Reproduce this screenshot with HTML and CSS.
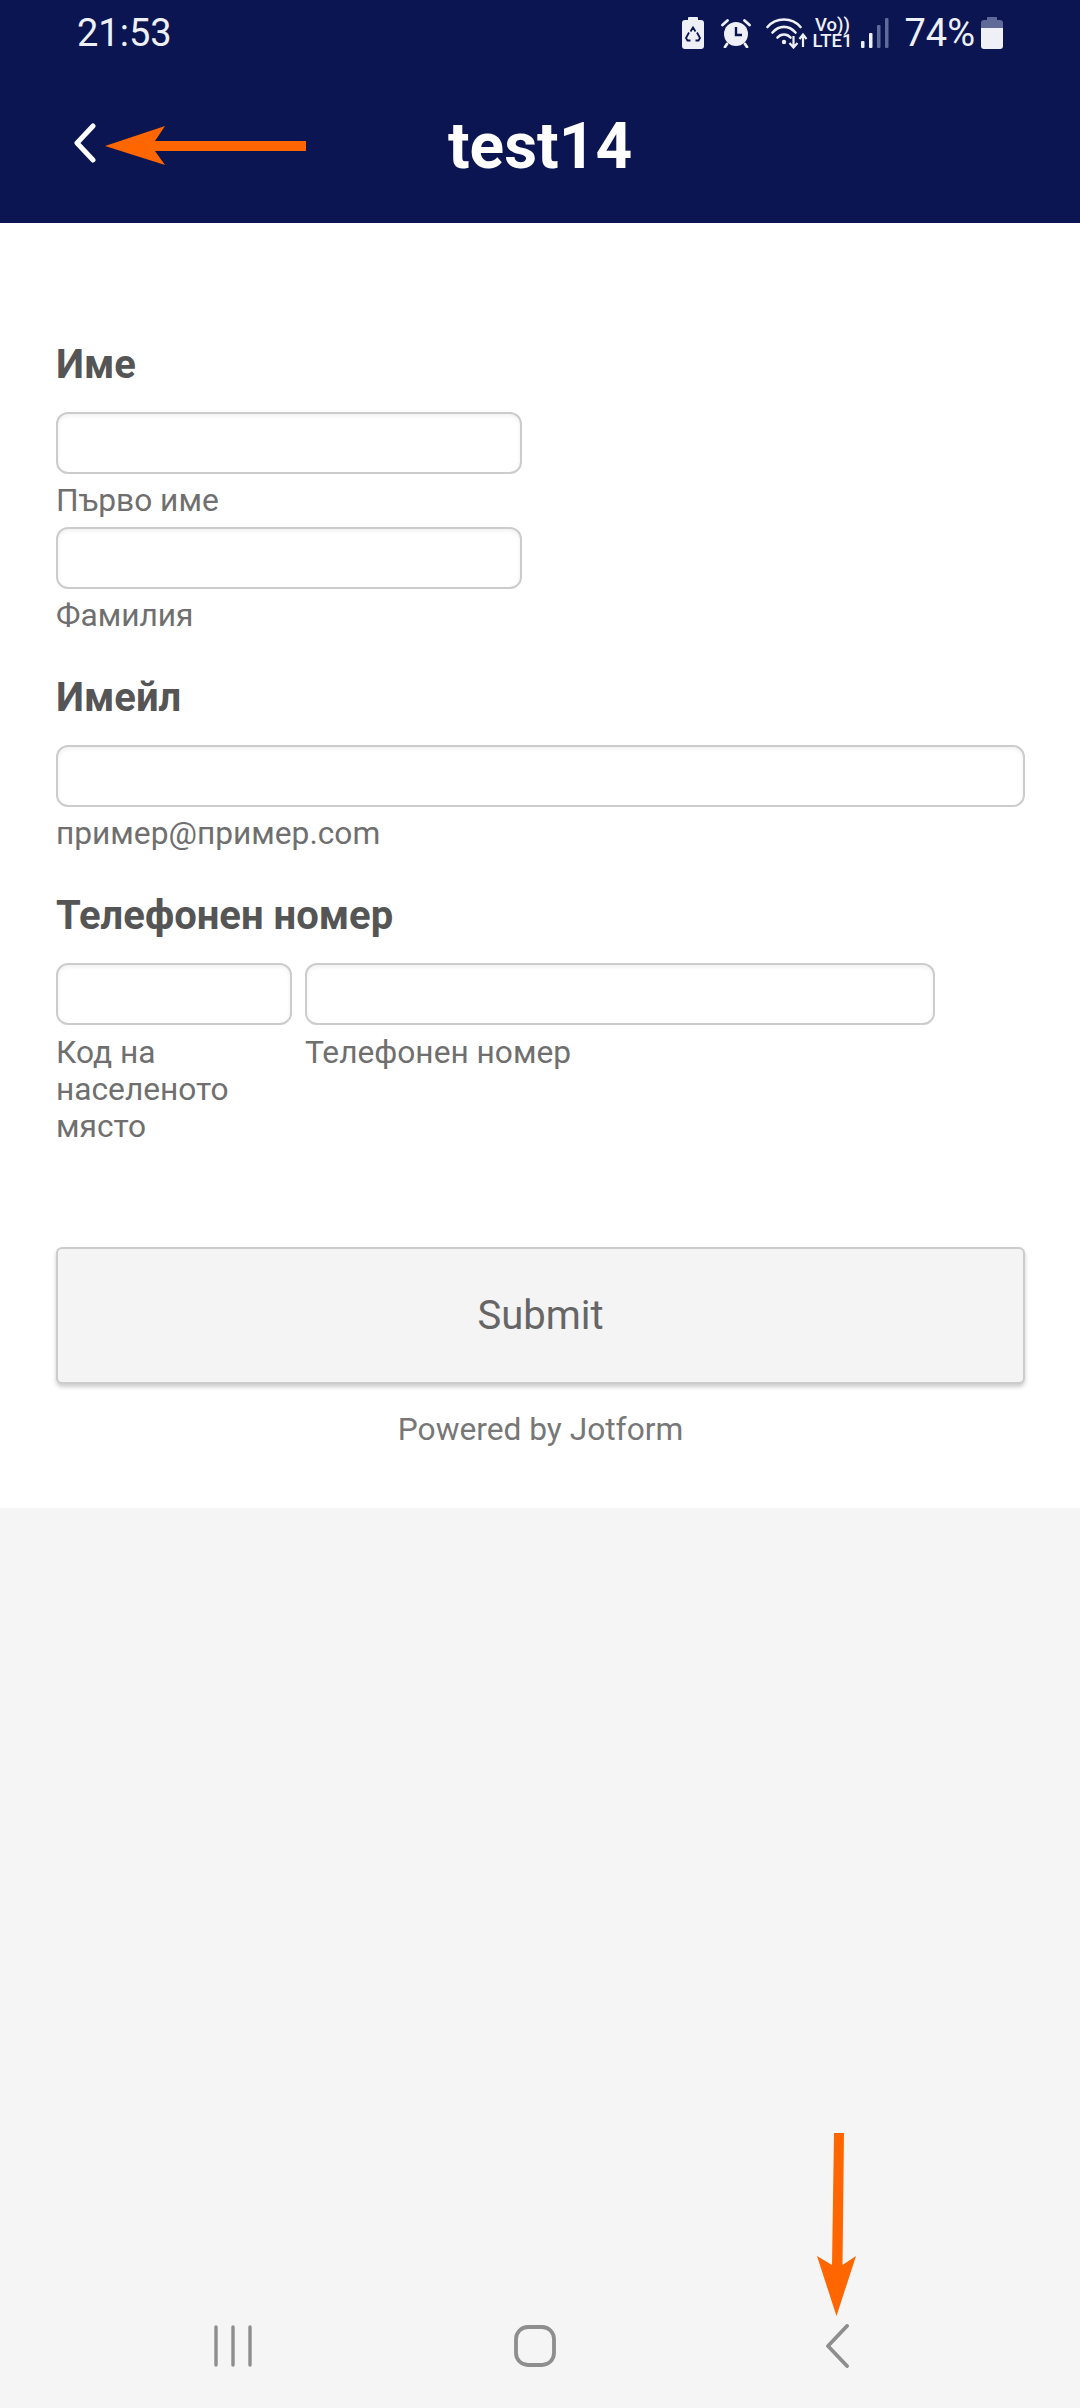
FILE: index.html
```html
<!DOCTYPE html>
<html lang="bg">
<head>
<meta charset="utf-8">
<title>test14</title>
<link rel="stylesheet" href="styles.css">
</head>
<body>
<div class="page">
  <header class="top">
    <div class="status">
      <span class="time">21:53</span>
      <div class="status-right">
        <svg class="ic-recycle" width="22" height="32" viewBox="0 0 22 32">
          <path d="M7 0h8a1 1 0 0 1 1 1v2h3a3 3 0 0 1 3 3v23a3 3 0 0 1-3 3H3a3 3 0 0 1-3-3V6a3 3 0 0 1 3-3h3V1a1 1 0 0 1 1-1z" fill="#eef0f6"/>
          <path d="M8.500 14.500L11 10.500l2.500 4M15 15.500l3 5.500-1.500 2.500H13.500M8.500 23.500H5.500L4 21l3-5.500" fill="none" stroke="#0a1551" stroke-width="1.800"/>
        </svg>
        <svg class="ic-alarm" width="30" height="30" viewBox="0 0 30 30">
          <circle cx="15" cy="16" r="12" fill="#eef0f6"/>
          <path d="M1.500 7L6.500 2.500M28.500 7L23.500 2.500M6 26l-2 3M24 26l2 3" stroke="#eef0f6" stroke-width="2.800" stroke-linecap="round"/>
          <path d="M15 9v8h6" fill="none" stroke="#0a1551" stroke-width="2.400"/>
        </svg>
        <svg class="ic-wifi" width="42" height="32" viewBox="0 0 42 32">
          <path d="M1.500 10C10 0 26 0 34.500 10M6.500 15.500C13 8 23 8 29.500 15.500M11.500 20.500C15 16.500 21 16.500 24.500 20.500" fill="none" stroke="#eef0f6" stroke-width="2.600" stroke-linecap="round"/>
          <circle cx="18" cy="25" r="2.200" fill="#eef0f6"/>
          <path d="M27.500 19v11M23.500 26l4 4.500 4-4.500M37 30V18M33.500 22l3.500-4.500 3.500 4.500" fill="none" stroke="#eef0f6" stroke-width="2.200"/>
        </svg>
        <span class="net">Vo)) LTE1</span>
        <svg class="ic-signal" width="28" height="30" viewBox="0 0 28 30">
          <rect x="0" y="23" width="3.500" height="7" rx="1" fill="#eef0f6"/>
          <rect x="8" y="15" width="3.500" height="15" rx="1" fill="#eef0f6"/>
          <rect x="16" y="7" width="3.500" height="23" rx="1" fill="#5f6a98"/>
          <rect x="24" y="0" width="3.500" height="30" rx="1" fill="#5f6a98"/>
        </svg>
        <span class="pct">74%</span>
        <svg class="ic-batt" width="22" height="32" viewBox="0 0 22 32">
          <path d="M7 0h8a1 1 0 0 1 1 1v2h3a3 3 0 0 1 3 3v5H0V6a3 3 0 0 1 3-3h3V1a1 1 0 0 1 1-1z" fill="#5f6a98"/>
          <path d="M0 11h22v18a3 3 0 0 1-3 3H3a3 3 0 0 1-3-3z" fill="#eef0f6"/>
        </svg>
      </div>
    </div>
    <div class="titlebar">
      <svg class="back" width="24" height="40" viewBox="0 0 24 40">
        <path d="M20 3L4 20l16 17" fill="none" stroke="#fff" stroke-width="5" stroke-linecap="round" stroke-linejoin="round"/>
      </svg>
      <h1 class="title">test14</h1>
    </div>
  </header>

  <form class="form">
    <section class="field">
      <label class="label">Име</label>
      <div class="sub-field">
        <input class="input" type="text">
        <span class="sub">Първо име</span>
      </div>
      <div class="sub-field">
        <input class="input" type="text">
        <span class="sub">Фамилия</span>
      </div>
    </section>
    <section class="field">
      <label class="label">Имейл</label>
      <div class="sub-field">
        <input class="input input-wide" type="text">
        <span class="sub">пример@пример.com</span>
      </div>
    </section>
    <section class="field">
      <label class="label">Телефонен номер</label>
      <div class="phone">
        <div class="sub-field area">
          <input class="input input-fill" type="text">
          <span class="sub">Код на населеното място</span>
        </div>
        <div class="sub-field number">
          <input class="input input-fill" type="text">
          <span class="sub">Телефонен номер</span>
        </div>
      </div>
    </section>
    <button class="submit" type="button">Submit</button>
    <p class="powered">Powered by Jotform</p>
  </form>

  <div class="filler"></div>

  <nav class="nav">
    <div class="nav-cell">
      <svg width="38" height="42" viewBox="0 0 38 42">
        <path d="M2 2v38M19 2v38M36 2v38" stroke="#8e8e8e" stroke-width="3.400" stroke-linecap="round"/>
      </svg>
    </div>
    <div class="nav-cell">
      <svg width="42" height="42" viewBox="0 0 42 42">
        <rect x="2" y="2" width="38" height="38" rx="12" fill="none" stroke="#8e8e8e" stroke-width="3.800"/>
      </svg>
    </div>
    <div class="nav-cell">
      <svg width="24" height="44" viewBox="0 0 24 44">
        <path d="M22 2L3 22l19 20" fill="none" stroke="#8e8e8e" stroke-width="3.800" stroke-linecap="round" stroke-linejoin="round"/>
      </svg>
    </div>
  </nav>

  <svg class="mark mark-left" width="202" height="40" viewBox="0 0 202 40">
    <path d="M0 20L60 0 50 15H201V25H50L60 39z" fill="#ff6600"/>
  </svg>
  <svg class="mark mark-down" width="40" height="184" viewBox="0 0 40 184">
    <path d="M17 0H27L25.500 132 39 123 19.500 183 0 123 15 132z" fill="#ff6600"/>
  </svg>
</div>
</body>
</html>
```
FILE: styles.css
```css
* { box-sizing: border-box; }
html, body { margin: 0; padding: 0; }
body { font-family: Roboto, "Noto Sans", sans-serif; background: #f5f5f5; }

.page {
  position: relative;
  width: 1080px;
  height: 2408px;
  display: flex;
  flex-direction: column;
  overflow: hidden;
  background: #f5f5f5;
}

.top { height: 223px; background: #0a1551; color: #fff; flex: none; }

.status {
  height: 66px;
  padding: 0 77px;
  display: flex;
  align-items: center;
  justify-content: space-between;
  color: #eef0f6;
}
.time { font-size: 38px; line-height: 66px; }
.status-right { display: flex; align-items: center; }
.ic-recycle { margin-right: 17px; }
.ic-alarm { margin-right: 15px; }
.ic-wifi { margin-right: 4px; }
.net {
  width: 40px;
  margin-right: 9px;
  font-size: 18.500px;
  line-height: 16px;
  font-weight: 500;
  text-align: center;
}
.ic-signal { margin-right: 15px; }
.pct { font-size: 38px; line-height: 66px; margin-right: 6px; }

.titlebar {
  position: relative;
  height: 157px;
  display: flex;
  align-items: center;
  justify-content: center;
}
.back { position: absolute; left: 73px; top: 57px; }
.title { margin: 4px 0 0; font-size: 64px; line-height: 80px; font-weight: 700; }

.form { flex: none; background: #fff; padding: 118px 55px 58px 56px; }
.field { margin-bottom: 40px; }
.field:nth-of-type(3) { margin-bottom: 0; }
.label {
  display: block;
  font-size: 40px;
  line-height: 48px;
  font-weight: 700;
  color: #555;
  margin-bottom: 23px;
}
.sub-field { display: flex; flex-direction: column; margin-bottom: 8px; }
.sub-field:last-child { margin-bottom: 0; }
.input {
  display: block;
  width: 466px;
  height: 62px;
  padding: 0;
  background: #fff;
  border: 2px solid #ccc;
  border-radius: 12px;
  box-shadow: inset 0 2px 4px rgba(0, 0, 0, 0.06);
  outline: none;
}
.input-wide { width: 969px; }
.input-fill { width: 100%; }
.sub {
  font-size: 31.700px;
  line-height: 37px;
  color: #6f6f6f;
  margin-top: 8px;
}
.phone { display: flex; gap: 13px; }
.phone .sub-field { margin-bottom: 0; }
.phone .sub { margin-top: 9px; }
.area { width: 236px; }
.number { width: 630px; }

.submit {
  display: block;
  width: 969px;
  height: 137px;
  margin-top: 102px;
  padding: 0;
  font-family: inherit;
  font-size: 40px;
  color: #666;
  background: #f4f4f4;
  border: 2px solid #ccc;
  border-radius: 6px;
  box-shadow: 0 3px 4px rgba(0, 0, 0, 0.2);
}
.powered {
  margin: 26px 0 0;
  font-size: 31.700px;
  line-height: 40px;
  text-align: center;
  color: #777;
}

.filler { flex: 1; }

.nav {
  flex: none;
  display: grid;
  grid-template-columns: repeat(3, 302px);
  padding: 0 0 40px 82px;
}
.nav-cell { display: flex; justify-content: center; align-items: center; height: 44px; }

.mark { position: absolute; }
.mark-left { left: 105px; top: 126px; }
.mark-down { left: 817px; top: 2133px; }
```
